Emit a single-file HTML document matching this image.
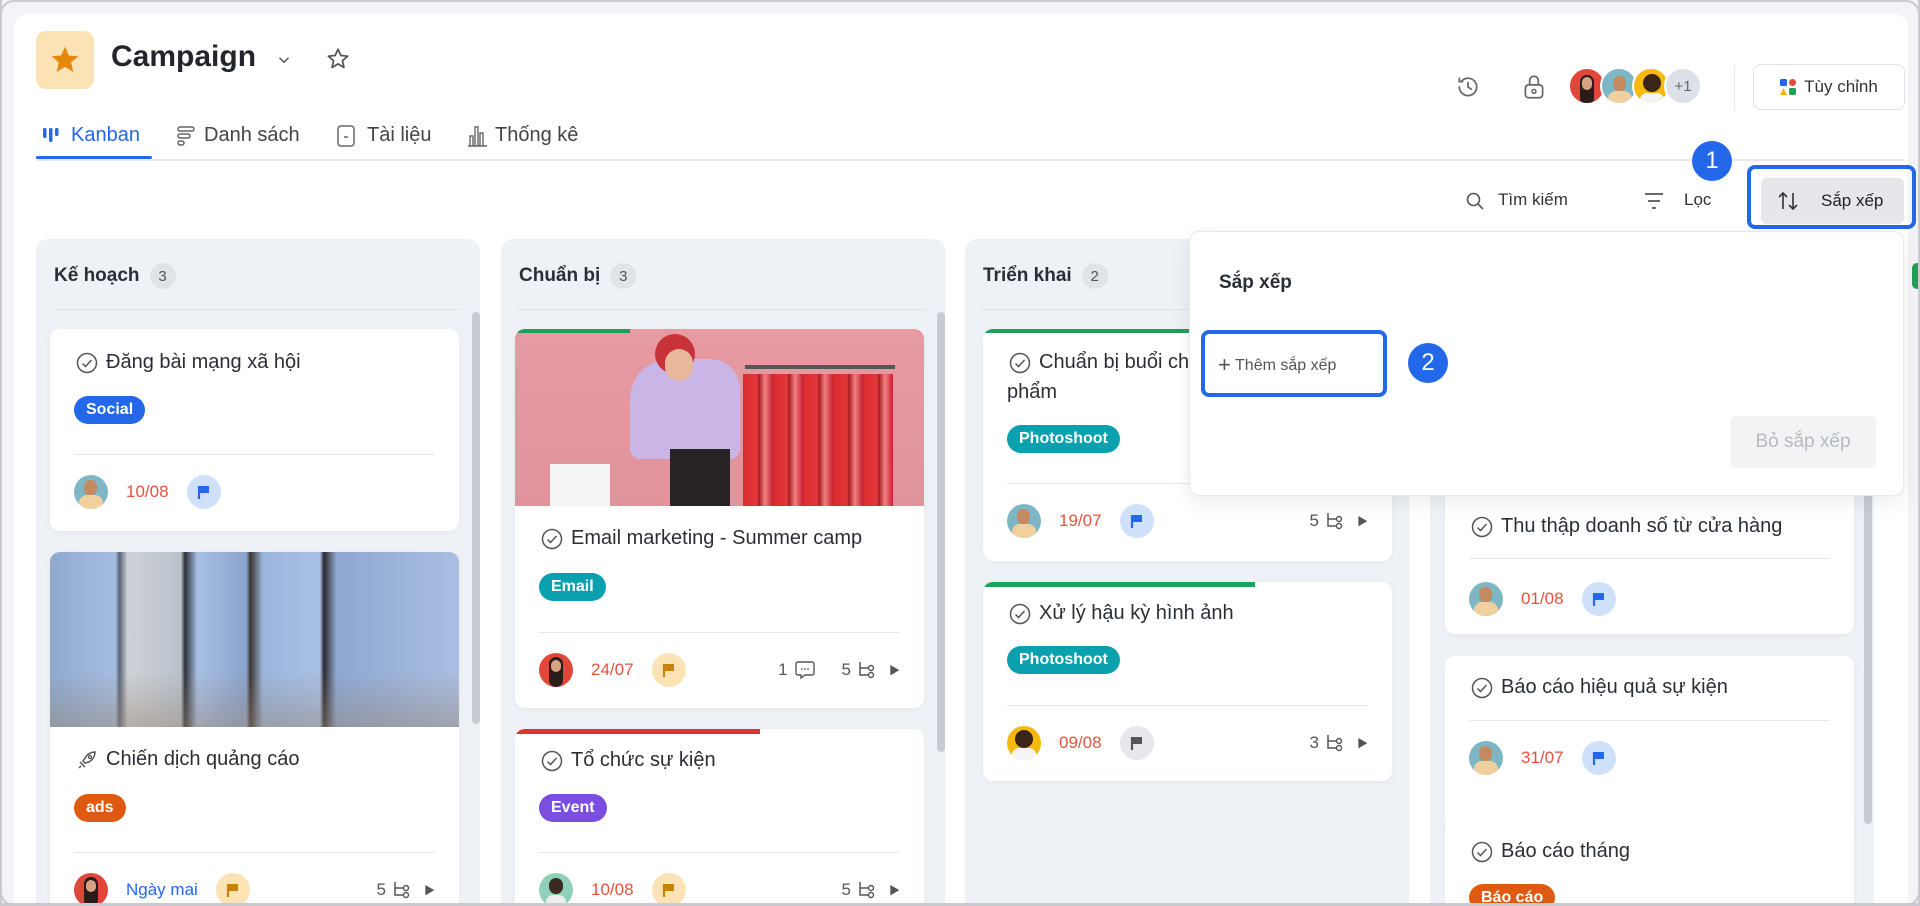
<!DOCTYPE html>
<html><head><meta charset="utf-8"><style>
*{box-sizing:border-box;margin:0;padding:0}
html{width:1920px;height:906px;overflow:hidden}
body{width:1920px;height:906px;overflow:hidden;background:#f3f4f7;font-family:"Liberation Sans","Noto Sans CJK SC",sans-serif;color:#1f2329;position:relative}
#root{position:absolute;left:0;top:0;width:1920px;height:906px;overflow:hidden}
.frame{position:absolute;left:0;top:0;width:1920px;height:906px;border:2px solid #c9cbd1;border-radius:14px;overflow:hidden;background:#f3f4f7}
.panel{position:absolute;left:12px;top:12px;width:1894px;height:900px;background:#fff;border-radius:14px 14px 0 0}
.a{position:absolute}
.hav{position:absolute;overflow:hidden}
.col{position:absolute;top:239px;width:444px;height:680px;background:#eef1f5;border-radius:12px}
.colh{position:absolute;left:18px;top:24px;font-size:19px;font-weight:bold;color:#2a2f36;display:flex;align-items:center;gap:10px}
.cnt{width:26px;height:26px;border-radius:13px;background:#e0e3e8;font-size:15px;font-weight:normal;color:#555;display:flex;align-items:center;justify-content:center}
.hdiv{position:absolute;left:18px;right:18px;top:70px;height:1px;background:#dfe2e7}
.card{position:absolute;width:409px;background:#fff;border-radius:10px;box-shadow:0 2px 6px rgba(0,0,0,.04);overflow:hidden}
.ttl{position:absolute;left:26px;font-size:20px;color:#2a2f36;display:flex;align-items:center;gap:8px;white-space:nowrap}
.chk{width:22px;height:22px;flex:none}
.tag{position:absolute;left:24px;height:28px;padding:0 12px;border-radius:14px;color:#fff;font-size:16px;line-height:28px;font-weight:bold}
.dv{position:absolute;left:24px;right:24px;height:1px;background:#e6e8ec}
.ft{position:absolute;left:24px;right:24px;height:36px;display:flex;align-items:center}
.av{width:34px;height:34px;border-radius:17px;flex:none;position:relative;overflow:hidden}
.dt{font-size:17px;margin-left:18px;color:#e4533d}
.fl{width:34px;height:34px;border-radius:17px;margin-left:18px;display:flex;align-items:center;justify-content:center}
.rt{margin-left:auto;display:flex;align-items:center;gap:6px;font-size:17px;color:#555}
.sb{position:absolute;width:8px;border-radius:4px;background:#c8ccd2}
.badge{position:absolute;width:40px;height:40px;border-radius:20px;background:#2268e8;color:#fff;font-size:24px;display:flex;align-items:center;justify-content:center}
</style></head><body><div id="root">
<div class="frame"><div class="panel"></div></div>

<!-- header -->
<div class="a" style="left:36px;top:31px;width:58px;height:58px;background:#fbe3b6;border-radius:10px;display:flex;align-items:center;justify-content:center">
<svg width="32" height="32" viewBox="0 0 24 24"><path d="M12 2l2.9 6.6 7.1.6-5.4 4.7 1.6 7-6.2-3.7-6.2 3.7 1.6-7L2 9.2l7.1-.6z" fill="#e5870b"/></svg></div>
<div class="a" style="left:111px;top:40px;font-size:30px;font-weight:bold;color:#22262c">Campaign</div>
<svg class="a" style="left:275px;top:51px" width="18" height="18" viewBox="0 0 24 24"><path d="M6 9l6 6 6-6" stroke="#555" stroke-width="2" fill="none"/></svg>
<svg class="a" style="left:325px;top:46px" width="26" height="26" viewBox="0 0 24 24"><path d="M12 3l2.6 5.8 6.3.6-4.8 4.2 1.4 6.2-5.5-3.3-5.5 3.3 1.4-6.2-4.8-4.2 6.3-.6z" fill="none" stroke="#555" stroke-width="1.6" stroke-linejoin="round"/></svg>

<!-- tabs -->
<svg class="a" style="left:42px;top:126px" width="18" height="18" viewBox="0 0 18 18"><rect x="1" y="2" width="3.5" height="10" rx="1.5" fill="#2268e8"/><rect x="7" y="2" width="3.5" height="14" rx="1.5" fill="#2268e8"/><rect x="13" y="2" width="3.5" height="8" rx="1.5" fill="#2268e8"/></svg>
<div class="a" style="left:71px;top:124px;font-size:20px;color:#2268e8">Kanban</div>
<svg class="a" style="left:176px;top:125px" width="20" height="22" viewBox="0 0 20 22"><rect x="2" y="2" width="16" height="4" rx="2" fill="none" stroke="#666" stroke-width="1.5"/><rect x="2" y="9" width="12" height="4" rx="2" fill="none" stroke="#666" stroke-width="1.5"/><rect x="2" y="16" width="6" height="4" rx="2" fill="none" stroke="#666" stroke-width="1.5"/></svg>
<div class="a" style="left:204px;top:124px;font-size:20px;color:#444">Danh sách</div>
<svg class="a" style="left:336px;top:124px" width="20" height="24" viewBox="0 0 20 24"><rect x="2" y="2" width="16" height="20" rx="3" fill="none" stroke="#666" stroke-width="1.5"/><path d="M8 13h4" stroke="#666" stroke-width="1.5"/></svg>
<div class="a" style="left:367px;top:124px;font-size:20px;color:#444">Tài liệu</div>
<svg class="a" style="left:466px;top:124px" width="22" height="24" viewBox="0 0 22 24"><path d="M2 22h19M4 22V12h3v10M9 22V3h3v19M14 22V9h3v13" fill="none" stroke="#666" stroke-width="1.4"/></svg>
<div class="a" style="left:495px;top:124px;font-size:20px;color:#444">Thống kê</div>
<div class="a" style="left:36px;top:156px;width:116px;height:3px;background:#2268e8;border-radius:2px"></div>
<div class="a" style="left:36px;top:159px;width:1868px;height:2px;background:#e6e8ec"></div>

<!-- right header -->
<svg class="a" style="left:1455px;top:74px" width="26" height="26" viewBox="0 0 24 24"><path d="M4 12a8 8 0 1 0 2.3-5.7M4 4v3h3M12 8v4l3 2" fill="none" stroke="#666" stroke-width="1.6" stroke-linecap="round"/></svg>
<svg class="a" style="left:1521px;top:73px" width="26" height="28" viewBox="0 0 24 26"><rect x="4" y="11" width="16" height="12" rx="3" fill="none" stroke="#666" stroke-width="1.6"/><path d="M8 11V7a4 4 0 0 1 8 0v4" fill="none" stroke="#666" stroke-width="1.6"/><circle cx="12" cy="17" r="1.8" fill="none" stroke="#666" stroke-width="1.4"/></svg>
<div class="hav" style="left:1568px;top:67px;width:38px;height:38px;border-radius:19px;background:#e0473a;border:2px solid #fff"><div class="a" style="left:10px;top:6px;width:14px;height:30px;background:#2a1c18;border-radius:7px"></div><div class="a" style="left:12px;top:8px;width:10px;height:13px;background:#d9a283;border-radius:5px"></div></div>
<div class="hav" style="left:1600px;top:67px;width:38px;height:38px;border-radius:19px;background:#7fb6c6;border:2px solid #fff"><div class="a" style="left:11px;top:7px;width:13px;height:15px;background:#c48a62;border-radius:6px"></div><div class="a" style="left:6px;top:22px;width:24px;height:16px;background:#f1d0a0;border-radius:8px"></div></div>
<div class="hav" style="left:1632px;top:67px;width:38px;height:38px;border-radius:19px;background:#f7b90c;border:2px solid #fff"><div class="a" style="left:9px;top:5px;width:18px;height:18px;background:#3a2618;border-radius:9px"></div><div class="a" style="left:6px;top:24px;width:24px;height:14px;background:#f4f4f4;border-radius:8px"></div></div>
<div class="a" style="left:1664px;top:67px;width:38px;height:38px;border-radius:19px;background:#dde1e7;border:2px solid #fff;font-size:15px;color:#666;display:flex;align-items:center;justify-content:center">+1</div>
<div class="a" style="left:1734px;top:66px;width:1px;height:44px;background:#e3e5e9"></div>
<div class="a" style="left:1753px;top:64px;width:152px;height:46px;border:1px solid #dfe2e6;border-radius:8px;display:flex;align-items:center;justify-content:center;gap:8px;font-size:17px;color:#333">
<svg width="16" height="16" viewBox="0 0 16 16"><rect x="0" y="0" width="7" height="7" rx="1.5" fill="#2268e8"/><rect x="9" y="0" width="7" height="7" rx="3.5" fill="#e84a3a"/><path d="M3.5 9L7 16H0z" fill="#f4b400"/><rect x="9" y="9" width="7" height="7" rx="1.5" fill="#1ea05a"/></svg>Tùy chỉnh</div>

<!-- toolbar -->
<svg class="a" style="left:1465px;top:191px" width="20" height="20" viewBox="0 0 20 20"><circle cx="8.5" cy="8.5" r="6" fill="none" stroke="#555" stroke-width="1.6"/><path d="M13 13l5 5" stroke="#555" stroke-width="1.6"/></svg>
<div class="a" style="left:1498px;top:190px;font-size:17px;color:#333">Tìm kiếm</div>
<svg class="a" style="left:1643px;top:191px" width="22" height="20" viewBox="0 0 22 20"><path d="M2 3h18M5 10h12M9 17h4" stroke="#555" stroke-width="1.8"/></svg>
<div class="a" style="left:1684px;top:190px;font-size:17px;color:#333">Lọc</div>
<div class="a" style="left:1747px;top:165px;width:169px;height:64px;border:4px solid #2268e8;border-radius:8px"></div>
<div class="a" style="left:1761px;top:178px;width:143px;height:46px;background:#e5e7eb;border-radius:6px;display:flex;align-items:center;padding-left:16px;gap:22px;font-size:17px;color:#222">
<svg width="22" height="22" viewBox="0 0 22 22"><path d="M6 19V3M2 7l4-4 4 4M16 3v16M12 15l4 4 4-4" fill="none" stroke="#333" stroke-width="1.6"/></svg>Sắp xếp</div>
<div class="badge" style="left:1692px;top:141px">1</div>

<!-- columns -->
<div class="col" style="left:36px"><div class="colh">Kế hoạch<span class="cnt">3</span></div><div class="hdiv"></div></div>
<div class="col" style="left:501px"><div class="colh">Chuẩn bị<span class="cnt">3</span></div><div class="hdiv"></div></div>
<div class="col" style="left:965px"><div class="colh">Triển khai<span class="cnt">2</span></div><div class="hdiv"></div></div>
<div class="col" style="left:1430px"><div class="hdiv"></div></div>
<div class="a" style="left:1912px;top:263px;width:10px;height:26px;background:#1ea05a;border-radius:5px"></div>
<div class="sb" style="left:472px;top:312px;height:412px"></div>
<div class="sb" style="left:937px;top:312px;height:440px"></div>
<div class="sb" style="left:1864px;top:420px;height:404px"></div>

<!-- svg defs -->
<svg width="0" height="0" style="position:absolute"><defs>
<symbol id="ck" viewBox="0 0 22 22"><circle cx="11" cy="11" r="9.5" fill="none" stroke="#555" stroke-width="1.5"/><path d="M6.5 11.5l3 3 6-6.5" fill="none" stroke="#555" stroke-width="1.5"/></symbol>
<symbol id="sub" viewBox="0 0 20 20"><path d="M3 2v13h8M3 8h8" fill="none" stroke="#555" stroke-width="1.5"/><circle cx="14" cy="8" r="2.5" fill="none" stroke="#555" stroke-width="1.4"/><circle cx="14" cy="15" r="2.5" fill="none" stroke="#555" stroke-width="1.4"/></symbol>
<symbol id="flg" viewBox="0 0 16 16"><path d="M3 2v13" stroke="currentColor" stroke-width="2.2"/><path d="M3 2h10v7H3z" fill="currentColor"/></symbol>
</defs></svg>

<!-- col1 cards -->
<div class="card" style="left:50px;top:329px;height:202px">
<div class="ttl" style="top:22px"><svg class="chk"><use href="#ck"/></svg>Đăng bài mạng xã hội</div>
<div class="tag" style="top:67px;background:#2268e8">Social</div>
<div class="dv" style="top:125px"></div>
<div class="ft" style="top:145px"><div class="av" style="background:#7fb6c6"><div class="a" style="left:10px;top:5px;width:13px;height:15px;background:#c48a62;border-radius:6px"></div><div class="a" style="left:5px;top:20px;width:24px;height:16px;background:#f1d0a0;border-radius:8px"></div></div><span class="dt">10/08</span><div class="fl" style="background:#cfe0fb;color:#2268e8"><svg width="16" height="16"><use href="#flg"/></svg></div></div>
</div>
<div class="card" style="left:50px;top:552px;height:380px">
<div class="a" style="left:0;top:0;width:409px;height:175px;background:linear-gradient(90deg,#8fa9cf 0,#a5bde0 16%,#5a6478 17%,#cfd2d8 19%,#b9c2cc 32%,#2d2f38 33%,#a9c0e4 36%,#8aa3cc 48%,#3a3430 49%,#9bb6de 52%,#a8c0e4 66%,#2b2a2e 67%,#8ea8d2 70%,#aabee0 100%)"></div>
<div class="a" style="left:0;top:120px;width:409px;height:55px;background:linear-gradient(180deg,rgba(190,170,140,0) 0,rgba(150,130,110,.45) 100%)"></div>
<div class="ttl" style="top:196px"><svg class="chk" viewBox="0 0 22 22"><path d="M5 17l-2 2M4 13l5 5M9 9c3-5 7-6 10-6 0 3-1 7-6 10l-4 1-2-2z" fill="none" stroke="#555" stroke-width="1.5"/><circle cx="14" cy="8" r="1.5" fill="none" stroke="#555" stroke-width="1.3"/></svg>Chiến dịch quảng cáo</div>
<div class="tag" style="top:242px;background:#de5a10">ads</div>
<div class="dv" style="top:300px"></div>
<div class="ft" style="top:320px"><div class="av" style="background:#e0473a"><div class="a" style="left:10px;top:4px;width:14px;height:30px;background:#2a1c18;border-radius:7px"></div><div class="a" style="left:12px;top:7px;width:10px;height:12px;background:#d9a283;border-radius:5px"></div></div><span class="dt" style="color:#2268e8">Ngày mai</span><div class="fl" style="background:#fbe3b6;color:#c98206"><svg width="16" height="16"><use href="#flg"/></svg></div><div class="rt">5 <svg width="20" height="20"><use href="#sub"/></svg> <span style="font-size:11px;margin-left:6px">▶</span></div></div>
</div>

<!-- col2 cards -->
<div class="card" style="left:515px;top:329px;height:379px">
<div class="a" style="left:0;top:0;width:409px;height:177px;background:linear-gradient(180deg,#e79aa2,#e0939b)"></div>
<div class="a" style="left:115px;top:30px;width:110px;height:100px;background:#c9b6e6;border-radius:40px 30px 10px 10px"></div>
<div class="a" style="left:140px;top:5px;width:40px;height:40px;background:#c8333a;border-radius:20px"></div>
<div class="a" style="left:150px;top:20px;width:28px;height:32px;background:#e8b89c;border-radius:14px"></div>
<div class="a" style="left:155px;top:120px;width:60px;height:57px;background:#2a2326"></div>
<div class="a" style="left:35px;top:135px;width:60px;height:42px;background:#f4f4f4"></div>
<div class="a" style="left:230px;top:36px;width:150px;height:4px;background:#555"></div>
<div class="a" style="left:228px;top:45px;width:150px;height:132px;background:repeating-linear-gradient(90deg,#d82a2e 0,#e2383a 14px,#a81d24 16px,#f08080 22px,#c42030 30px)"></div>
<div class="a" style="left:0;top:0;width:115px;height:4px;background:#1ea05a"></div>
<div class="ttl" style="top:198px"><svg class="chk"><use href="#ck"/></svg>Email marketing - Summer camp</div>
<div class="tag" style="top:244px;background:#0aa0ae">Email</div>
<div class="dv" style="top:303px"></div>
<div class="ft" style="top:323px"><div class="av" style="background:#e0473a"><div class="a" style="left:10px;top:4px;width:14px;height:30px;background:#2a1c18;border-radius:7px"></div><div class="a" style="left:12px;top:7px;width:10px;height:12px;background:#d9a283;border-radius:5px"></div></div><span class="dt">24/07</span><div class="fl" style="background:#fbe3b6;color:#c98206"><svg width="16" height="16"><use href="#flg"/></svg></div><div class="rt">1<svg width="22" height="22" viewBox="0 0 22 22"><path d="M4 3h14a2 2 0 0 1 2 2v9a2 2 0 0 1-2 2h-7l-4 3v-3H4a2 2 0 0 1-2-2V5a2 2 0 0 1 2-2z" fill="none" stroke="#555" stroke-width="1.4"/><circle cx="8" cy="10" r=".9" fill="#555"/><circle cx="11" cy="10" r=".9" fill="#555"/><circle cx="14" cy="10" r=".9" fill="#555"/></svg><span style="margin-left:20px">5</span> <svg width="20" height="20"><use href="#sub"/></svg> <span style="font-size:11px;margin-left:6px">▶</span></div></div>
</div>
<div class="card" style="left:515px;top:729px;height:200px">
<div class="a" style="left:0;top:0;width:245px;height:5px;background:#d9362b"></div>
<div class="ttl" style="top:20px"><svg class="chk"><use href="#ck"/></svg>Tổ chức sự kiện</div>
<div class="tag" style="top:65px;background:#7a4fe0">Event</div>
<div class="dv" style="top:123px"></div>
<div class="ft" style="top:143px"><div class="av" style="background:#8fd1b8"><div class="a" style="left:10px;top:5px;width:14px;height:16px;background:#3a2a20;border-radius:7px"></div><div class="a" style="left:7px;top:22px;width:20px;height:14px;background:#eee;border-radius:8px"></div></div><span class="dt">10/08</span><div class="fl" style="background:#fbe3b6;color:#c98206"><svg width="16" height="16"><use href="#flg"/></svg></div><div class="rt">5 <svg width="20" height="20"><use href="#sub"/></svg> <span style="font-size:11px;margin-left:6px">▶</span></div></div>
</div>

<!-- col3 cards -->
<div class="card" style="left:983px;top:329px;height:232px">
<div class="a" style="left:0;top:0;width:300px;height:4px;background:#1ea05a"></div>
<div class="ttl" style="top:22px"><svg class="chk"><use href="#ck"/></svg>Chuẩn bị buổi chụp ảnh sản</div>
<div class="ttl" style="top:52px;left:24px">phẩm</div>
<div class="tag" style="top:96px;background:#0aa0ae">Photoshoot</div>
<div class="dv" style="top:154px"></div>
<div class="ft" style="top:174px"><div class="av" style="background:#7fb6c6"><div class="a" style="left:10px;top:5px;width:13px;height:15px;background:#c48a62;border-radius:6px"></div><div class="a" style="left:5px;top:20px;width:24px;height:16px;background:#f1d0a0;border-radius:8px"></div></div><span class="dt">19/07</span><div class="fl" style="background:#cfe0fb;color:#2268e8"><svg width="16" height="16"><use href="#flg"/></svg></div><div class="rt">5 <svg width="20" height="20"><use href="#sub"/></svg> <span style="font-size:11px;margin-left:6px">▶</span></div></div>
</div>
<div class="card" style="left:983px;top:582px;height:199px">
<div class="a" style="left:0;top:0;width:272px;height:5px;background:#1ea05a"></div>
<div class="ttl" style="top:20px"><svg class="chk"><use href="#ck"/></svg>Xử lý hậu kỳ hình ảnh</div>
<div class="tag" style="top:64px;background:#0aa0ae">Photoshoot</div>
<div class="dv" style="top:123px"></div>
<div class="ft" style="top:143px"><div class="av" style="background:#f7b90c"><div class="a" style="left:8px;top:4px;width:18px;height:18px;background:#3a2618;border-radius:9px"></div><div class="a" style="left:5px;top:22px;width:24px;height:14px;background:#f4f4f4;border-radius:8px"></div></div><span class="dt">09/08</span><div class="fl" style="background:#e6e8ec;color:#555"><svg width="16" height="16"><use href="#flg"/></svg></div><div class="rt">3 <svg width="20" height="20"><use href="#sub"/></svg> <span style="font-size:11px;margin-left:6px">▶</span></div></div>
</div>

<!-- col4 cards -->
<div class="card" style="left:1445px;top:440px;height:194px">
<div class="ttl" style="top:75px"><svg class="chk"><use href="#ck"/></svg>Thu thập doanh số từ cửa hàng</div>
<div class="dv" style="top:118px"></div>
<div class="ft" style="top:141px"><div class="av" style="background:#7fb6c6"><div class="a" style="left:10px;top:5px;width:13px;height:15px;background:#c48a62;border-radius:6px"></div><div class="a" style="left:5px;top:20px;width:24px;height:16px;background:#f1d0a0;border-radius:8px"></div></div><span class="dt">01/08</span><div class="fl" style="background:#cfe0fb;color:#2268e8"><svg width="16" height="16"><use href="#flg"/></svg></div></div>
</div>
<div class="card" style="left:1445px;top:656px;height:182px">
<div class="ttl" style="top:20px"><svg class="chk"><use href="#ck"/></svg>Báo cáo hiệu quả sự kiện</div>
<div class="dv" style="top:64px"></div>
<div class="ft" style="top:84px"><div class="av" style="background:#7fb6c6"><div class="a" style="left:10px;top:5px;width:13px;height:15px;background:#c48a62;border-radius:6px"></div><div class="a" style="left:5px;top:20px;width:24px;height:16px;background:#f1d0a0;border-radius:8px"></div></div><span class="dt">31/07</span><div class="fl" style="background:#cfe0fb;color:#2268e8"><svg width="16" height="16"><use href="#flg"/></svg></div></div>
</div>
<div class="card" style="left:1445px;top:820px;height:120px">
<div class="ttl" style="top:20px"><svg class="chk"><use href="#ck"/></svg>Báo cáo tháng</div>
<div class="tag" style="top:64px;background:#de5a10">Báo cáo</div>
</div>

<!-- dropdown -->
<div class="a" style="left:1189px;top:231px;width:715px;height:265px;background:#fff;border:1px solid #e6e8ec;border-radius:10px;box-shadow:0 6px 20px rgba(0,0,0,.08)">
<div class="a" style="left:29px;top:40px;font-size:19px;font-weight:bold;color:#2a2f36">Sắp xếp</div>
<div class="a" style="left:11px;top:98px;width:186px;height:67px;border:4px solid #2268e8;border-radius:8px"></div>
<div class="a" style="left:28px;top:120px;font-size:16px;color:#555"><span style="font-size:22px;vertical-align:-2px">+</span> Thêm sắp xếp</div>
<div class="a" style="left:540px;top:184px;width:146px;height:52px;background:#f2f3f5;border-radius:6px;font-size:19px;color:#b6bac1;display:flex;align-items:center;justify-content:center">Bỏ sắp xếp</div>
</div>
<div class="badge" style="left:1408px;top:343px">2</div>

<!-- bottom frame edge -->
<div class="a" style="left:0;top:903px;width:1920px;height:3px;background:#c9cbd1;z-index:10"></div>
<div class="a" style="left:0;top:0;width:2px;height:906px;background:#c9cbd1;z-index:10"></div>
<div class="a" style="left:1918px;top:0;width:2px;height:906px;background:#c9cbd1;z-index:10"></div>
</div></body></html>
